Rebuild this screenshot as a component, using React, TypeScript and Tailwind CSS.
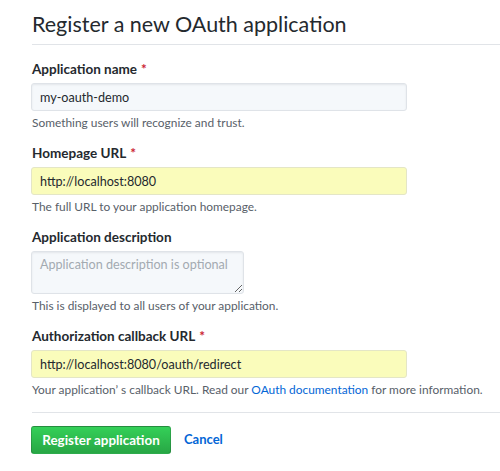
export default function App() {
  const font = { fontFamily: '"Lato", "Liberation Sans", sans-serif' };
  return (
    <div className="h-[471px] w-[500px] overflow-hidden bg-white pl-[32px] text-[#24292e]" style={font}>
      <div className="border-b border-[#e1e4e8] pb-[5px] pt-[9px]">
        <h1 className="text-[21.5px] font-normal leading-[30px]">Register a new OAuth application</h1>
      </div>

      <div className="mt-[14px]">
        <label className="flex items-center gap-[4px] text-[13.5px] font-bold leading-[20px]">
          Application name <span className="text-[#cb2431]">*</span>
        </label>
        <input
          readOnly
          value="my-oauth-demo"
          className="-ml-px mt-[4px] block h-[28px] w-[376px] rounded-[3px] border border-[#dfe3e8] bg-[#f5f8fb] px-[8px] text-[12.6px] text-[#24292e] shadow-[inset_0_1px_2px_rgba(27,31,35,0.075)] outline-none"
        />
        <p className="mt-[3px] text-[11.9px] leading-[18px] text-[#586069]">Something users will recognize and trust.</p>
      </div>

      <div className="mt-[11px]">
        <label className="flex items-center gap-[4px] text-[13.5px] font-bold leading-[20px]">
          Homepage URL <span className="text-[#cb2431]">*</span>
        </label>
        <input
          readOnly
          value="http://localhost:8080"
          className="-ml-px mt-[4px] block h-[28px] w-[376px] rounded-[3px] border border-[#e4e6c6] bg-[#fafcbb] px-[8px] text-[12.6px] text-[#24292e] outline-none"
        />
        <p className="mt-[3px] text-[11.9px] leading-[18px] text-[#586069]">The full URL to your application homepage.</p>
      </div>

      <div className="mt-[11px]">
        <label className="block text-[13.5px] font-bold leading-[20px]">Application description</label>
        <textarea
          readOnly
          placeholder="Application description is optional"
          className="-ml-px mt-[4px] block h-[43px] w-[213px] resize-y rounded-[3px] border border-[#dfe3e8] bg-[#f5f8fb] py-[4px] pl-[8px] pr-[2px] text-[12.6px] leading-[18px] shadow-[inset_0_1px_2px_rgba(27,31,35,0.075)] outline-none placeholder:text-[#a3aab1]"
        />
        <p className="mt-[3px] text-[11.9px] leading-[18px] text-[#586069]">This is displayed to all users of your application.</p>
      </div>

      <div className="mt-[11px]">
        <label className="flex items-center gap-[4px] text-[13.5px] font-bold leading-[20px]">
          Authorization callback URL <span className="text-[#cb2431]">*</span>
        </label>
        <input
          readOnly
          value="http://localhost:8080/oauth/redirect"
          className="-ml-px mt-[4px] block h-[28px] w-[376px] rounded-[3px] border border-[#e4e6c6] bg-[#fafcbb] px-[8px] text-[12.6px] text-[#24292e] outline-none"
        />
        <p className="mt-[3px] whitespace-nowrap text-[11.9px] leading-[18px] text-[#586069]">
          Your application’ s callback URL. Read our <a className="text-[#0366d6]">OAuth documentation</a> for more information.
        </p>
      </div>

      <div className="mt-[13px] border-t border-[#e1e4e8] pt-[13px]">
        <div className="flex items-center gap-[13px]">
          <button className="-ml-px h-[28px] w-[140px] rounded-[3px] border border-[rgba(27,31,35,0.2)] bg-gradient-to-b from-[#34d058] to-[#28a745] text-[13.4px] font-bold text-white">
            Register application
          </button>
          <a className="text-[13px] font-bold text-[#0366d6]">Cancel</a>
        </div>
      </div>
    </div>
  );
}
